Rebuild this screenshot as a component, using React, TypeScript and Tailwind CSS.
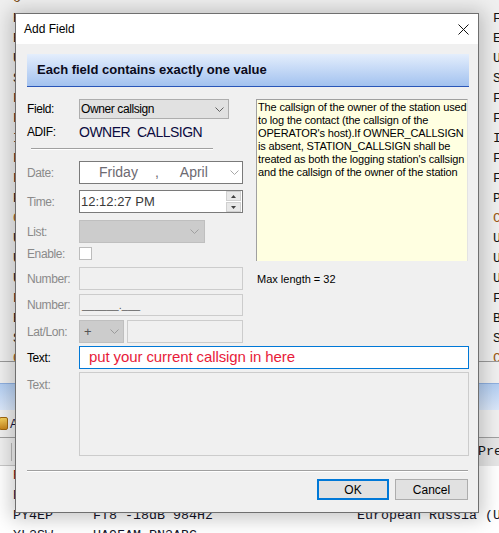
import React from "react"

const mono = "font-['Liberation_Mono','Courier_New',monospace]"
const sans = "font-['Liberation_Sans',Arial,sans-serif]"

// rows of the log list behind the dialog; only the first column and the
// column right of the dialog can be seen, so the rest is left out
const topRows = [
  { lead: "O", tail: " ", color: "text-[#7a4a10]" },
  { lead: "RA3DNC    FT8 -15dB 1210Hz  European Russia", tail: "F", color: "text-[#141414]" },
  { lead: "E", tail: "E", color: "text-[#141414]" },
  { lead: "U", tail: "U", color: "text-[#141414]" },
  { lead: "S", tail: "S", color: "text-[#141414]" },
  { lead: "F", tail: "F", color: "text-[#141414]" },
  { lead: "F", tail: "F", color: "text-[#141414]" },
  { lead: "I", tail: "I", color: "text-[#141414]" },
  { lead: "F", tail: "F", color: "text-[#141414]" },
  { lead: "F", tail: "F", color: "text-[#141414]" },
  { lead: "P", tail: "P", color: "text-[#141414]" },
  { lead: "C", tail: "C", color: "text-[#9a5714]" },
  { lead: "U", tail: "U", color: "text-[#141414]" },
  { lead: "U", tail: "U", color: "text-[#141414]" },
  { lead: "U", tail: "U", color: "text-[#141414]" },
  { lead: "F", tail: "F", color: "text-[#141414]" },
  { lead: "B", tail: "B", color: "text-[#141414]" },
  { lead: "S", tail: "S", color: "text-[#141414]" },
  { lead: "C", tail: "C", color: "text-[#9a5714]" },
]

const bottomRows = [
  { text: "R", color: "text-[#7a1414]" },
  { text: "E", color: "text-[#14144a]" },
  { text: "PY4EP".padEnd(10) + "FT8 -18dB 984Hz".padEnd(33) + "European Russia (UA)", color: "text-[#141428]" },
  { text: "YL2SW     UA9FAM RN3ABC", color: "text-[#141428]" },
]

function Chevron({ color }: { color: string }) {
  return (
    <svg width="9" height="5" viewBox="0 0 9 5" className="shrink-0">
      <path d="M0.5 0.5 L4.5 4.5 L8.5 0.5" fill="none" stroke={color} strokeWidth="1" />
    </svg>
  )
}

function Label({ children, disabled }: { children: React.ReactNode; disabled?: boolean }) {
  return (
    <span className={`w-[52px] shrink-0 text-[12px] tracking-[-0.4px] ${disabled ? "text-[#8a8a8a]" : "text-black"}`}>
      {children}
    </span>
  )
}

function AddFieldDialog() {
  return (
    <div
      className={`absolute left-[15px] top-[13px] w-[464px] h-[500px] flex flex-col border border-[#6f6f6f] bg-[#f0f0f0] shadow-[0_2px_18px_4px_rgba(0,0,0,0.22)] ${sans}`}
    >
      {/* title bar */}
      <div className="h-[30px] shrink-0 flex items-center justify-between bg-white pl-[8px] pr-[9px]">
        <span className="text-[12px] text-black">Add Field</span>
        <svg width="11" height="11" viewBox="0 0 11 11">
          <path d="M0.5 0.5 L10.5 10.5 M10.5 0.5 L0.5 10.5" stroke="#111" strokeWidth="1" />
        </svg>
      </div>

      <div className="flex-1 flex flex-col pl-[11px] pr-[9px]">
        {/* header banner */}
        <div className="mt-[10px] h-[33px] flex items-center pl-[10px] border-b border-[#2a56b8] bg-linear-to-b from-[#e4eefc] to-[#a3c2ef] text-[13px] font-bold text-[#0a0a1a]">
          Each field contains exactly one value
        </div>

        <div className="mt-[12px] flex gap-[13px]">
          {/* left column */}
          <div className="w-[216px] flex flex-col">
            <div className="h-[20px] flex items-center">
              <Label>Field:</Label>
              <div className="w-[150px] h-[20px] flex items-center justify-between bg-[#e1e1e1] border border-[#adadad] pl-[1px] pr-[4px]">
                <span className="text-[12px] tracking-[-0.4px] text-black">Owner callsign</span>
                <Chevron color="#606060" />
              </div>
            </div>

            <div className="mt-[2px] h-[22px] flex items-center">
              <Label>ADIF:</Label>
              <span className="text-[14px] tracking-[-0.5px] text-[#0b0b40]">OWNER&nbsp;&nbsp;CALLSIGN</span>
            </div>

            <div className="mt-[5px] ml-[4px] w-[182px] border-t border-[#a0a0a0] border-b border-b-white" />

            <div className="mt-[11px] h-[23px] flex items-center">
              <Label disabled>Date:</Label>
              <div className="w-[164px] h-[23px] flex items-center bg-white border border-[#7a7a7a] pl-[19px] pr-[3px] text-[14px] text-[#6d6a72]">
                <span>Friday</span>
                <span className="ml-[17px]">,</span>
                <span className="ml-[21px]">April</span>
                <span className="ml-auto">
                  <Chevron color="#a8a8a8" />
                </span>
              </div>
            </div>

            <div className="mt-[6px] h-[23px] flex items-center">
              <Label disabled>Time:</Label>
              <div className="w-[164px] h-[23px] flex items-center bg-white border border-[#7a7a7a] pl-[1px] pr-[1px]">
                <span className="text-[13px] text-[#3a3a3a]">12:12:27 PM</span>
                <div className="ml-auto w-[15px] h-[21px] flex flex-col gap-[1px]">
                  <div className="flex-1 flex items-center justify-center bg-[#e8e8e8] border border-[#d0d0d0]">
                    <svg width="5" height="3" viewBox="0 0 5 3">
                      <path d="M0 3 L2.5 0 L5 3 Z" fill="#404040" />
                    </svg>
                  </div>
                  <div className="flex-1 flex items-center justify-center bg-[#e8e8e8] border border-[#d0d0d0]">
                    <svg width="5" height="3" viewBox="0 0 5 3">
                      <path d="M0 0 L5 0 L2.5 3 Z" fill="#404040" />
                    </svg>
                  </div>
                </div>
              </div>
            </div>

            <div className="mt-[7px] h-[23px] flex items-center">
              <Label disabled>List:</Label>
              <div className="w-[126px] h-[23px] flex items-center justify-end bg-[#cccccc] border border-[#bfbfbf] pr-[5px]">
                <Chevron color="#a0a0a0" />
              </div>
            </div>

            <div className="mt-[4px] h-[13px] flex items-center">
              <Label disabled>Enable:</Label>
              <div className="w-[13px] h-[13px] bg-white border border-[#bcbcbc]" />
            </div>

            <div className="mt-[7px] h-[23px] flex items-center">
              <Label disabled>Number:</Label>
              <div className="w-[164px] h-[23px] bg-[#f0f0f0] border border-[#cccccc]" />
            </div>

            <div className="mt-[4px] h-[22px] flex items-center">
              <Label disabled>Number:</Label>
              <div className="w-[164px] h-[22px] flex items-center bg-[#f0f0f0] border border-[#cccccc] pl-[2px]">
                <span className="text-[11px] text-[#5a5a5a] whitespace-pre">______.___</span>
              </div>
            </div>

            <div className="mt-[4px] h-[23px] flex items-center">
              <Label disabled>Lat/Lon:</Label>
              <div className="w-[45px] h-[23px] flex items-center justify-between bg-[#cccccc] border border-[#bfbfbf] pl-[4px] pr-[4px]">
                <span className="text-[13px] text-[#555]">+</span>
                <Chevron color="#9a9a9a" />
              </div>
              <div className="ml-[3px] w-[116px] h-[23px] bg-[#f0f0f0] border border-[#cccccc]" />
            </div>
          </div>

          {/* right column */}
          <div className="w-[212px] flex flex-col">
            <div className="h-[162px] overflow-hidden bg-[#ffffe1] border-l border-t border-[#a0a0a0] border-r border-r-[#e3e3e3] pl-[1px] pt-[1px] text-[11px] leading-[13px] tracking-[-0.15px] text-black whitespace-nowrap">
              The callsign of the owner of the station used
              <br />
              to log the contact (the callsign of the
              <br />
              OPERATOR's host).If OWNER_CALLSIGN
              <br />
              is absent, STATION_CALLSIGN shall be
              <br />
              treated as both the logging station's callsign
              <br />
              and the callsign of the owner of the station
            </div>
            <div className="mt-[10px] text-[11px] leading-[16px] text-black pl-[1px]">Max length = 32</div>
          </div>
        </div>

        <div className="mt-[3px] h-[23px] flex items-center">
          <Label>Text:</Label>
          <div className="flex-1 h-[23px] flex items-center bg-white border border-[#0078d7] pl-[9px]">
            <span className="text-[15px] tracking-[-0.1px] text-[#e81b3a]">put your current callsign in here</span>
          </div>
        </div>

        <div className="mt-[3px] h-[84px] flex items-start">
          <div className="mt-[4px] flex">
            <Label disabled>Text:</Label>
          </div>
          <div className="flex-1 h-[84px] bg-[#f0f0f0] border border-[#cccccc]" />
        </div>

        <div className="mt-[14px] mr-[1px] border-t border-[#a0a0a0] border-b border-b-white" />

        <div className="mt-[7px] mr-[1px] flex justify-end gap-[6px]">
          <button className="w-[72px] h-[21px] flex items-center justify-center bg-[#e1e1e1] border-2 border-[#0078d7] text-[12px] text-black">
            OK
          </button>
          <button className="w-[73px] h-[21px] flex items-center justify-center bg-[#e1e1e1] border border-[#adadad] text-[12px] text-black">
            Cancel
          </button>
        </div>
      </div>
    </div>
  )
}

export default function App() {
  return (
    <div className={`relative w-[499px] h-[533px] overflow-hidden bg-white ${sans}`}>
      {/* upper log list */}
      <div className="h-[361px] overflow-hidden bg-[#efefef]">
        <div className={`-mt-[11px] ${mono} text-[13.33px]`}>
          {topRows.map((r, i) => (
            <div key={i} className={`h-[20px] leading-[20px] pl-[13px] flex whitespace-pre ${r.color}`}>
              <span>{r.lead}</span>
              <span className="ml-auto w-[6px] overflow-visible">{r.tail}</span>
            </div>
          ))}
        </div>
      </div>
      <div className="h-px bg-[#9a9a9a]" />
      <div className="h-[21px] bg-[#f0f0f0]" />
      <div className="h-[27px] border-t border-[#8fb0e0] bg-linear-to-b from-[#b3cef2] to-[#dbe8fa]" />
      <div className="h-[27px] flex items-center bg-[#f0f0f0]">
        <div className="w-[9px] h-[13px] -ml-[1px] rounded-[2px] bg-linear-to-b from-[#f6d15a] to-[#c8861a] border border-[#a0660e]" />
        <span className="ml-[2px] text-[12px] text-[#14143c]">A</span>
      </div>
      <div className="h-px bg-[#a0a0a0]" />
      <div className="h-[28px] flex items-center bg-[#f0f0f0] border-b border-[#c8c8c8]">
        <div className="ml-[11px] w-px h-[18px] bg-[#b8b8b8]" />
        <div className={`ml-auto w-[24px] h-[28px] flex items-center border-l border-[#adadad] bg-[#e6e6e6] pl-[2px] ${mono} text-[13.33px] text-[#141414] overflow-hidden`}>
          Prev
        </div>
      </div>
      {/* lower list */}
      <div className={`${mono} text-[13.33px]`}>
        {bottomRows.map((r, i) => (
          <div key={i} className={`h-[20px] leading-[20px] pl-[13px] whitespace-pre ${r.color}`}>
            {r.text}
          </div>
        ))}
      </div>

      <AddFieldDialog />
    </div>
  )
}
